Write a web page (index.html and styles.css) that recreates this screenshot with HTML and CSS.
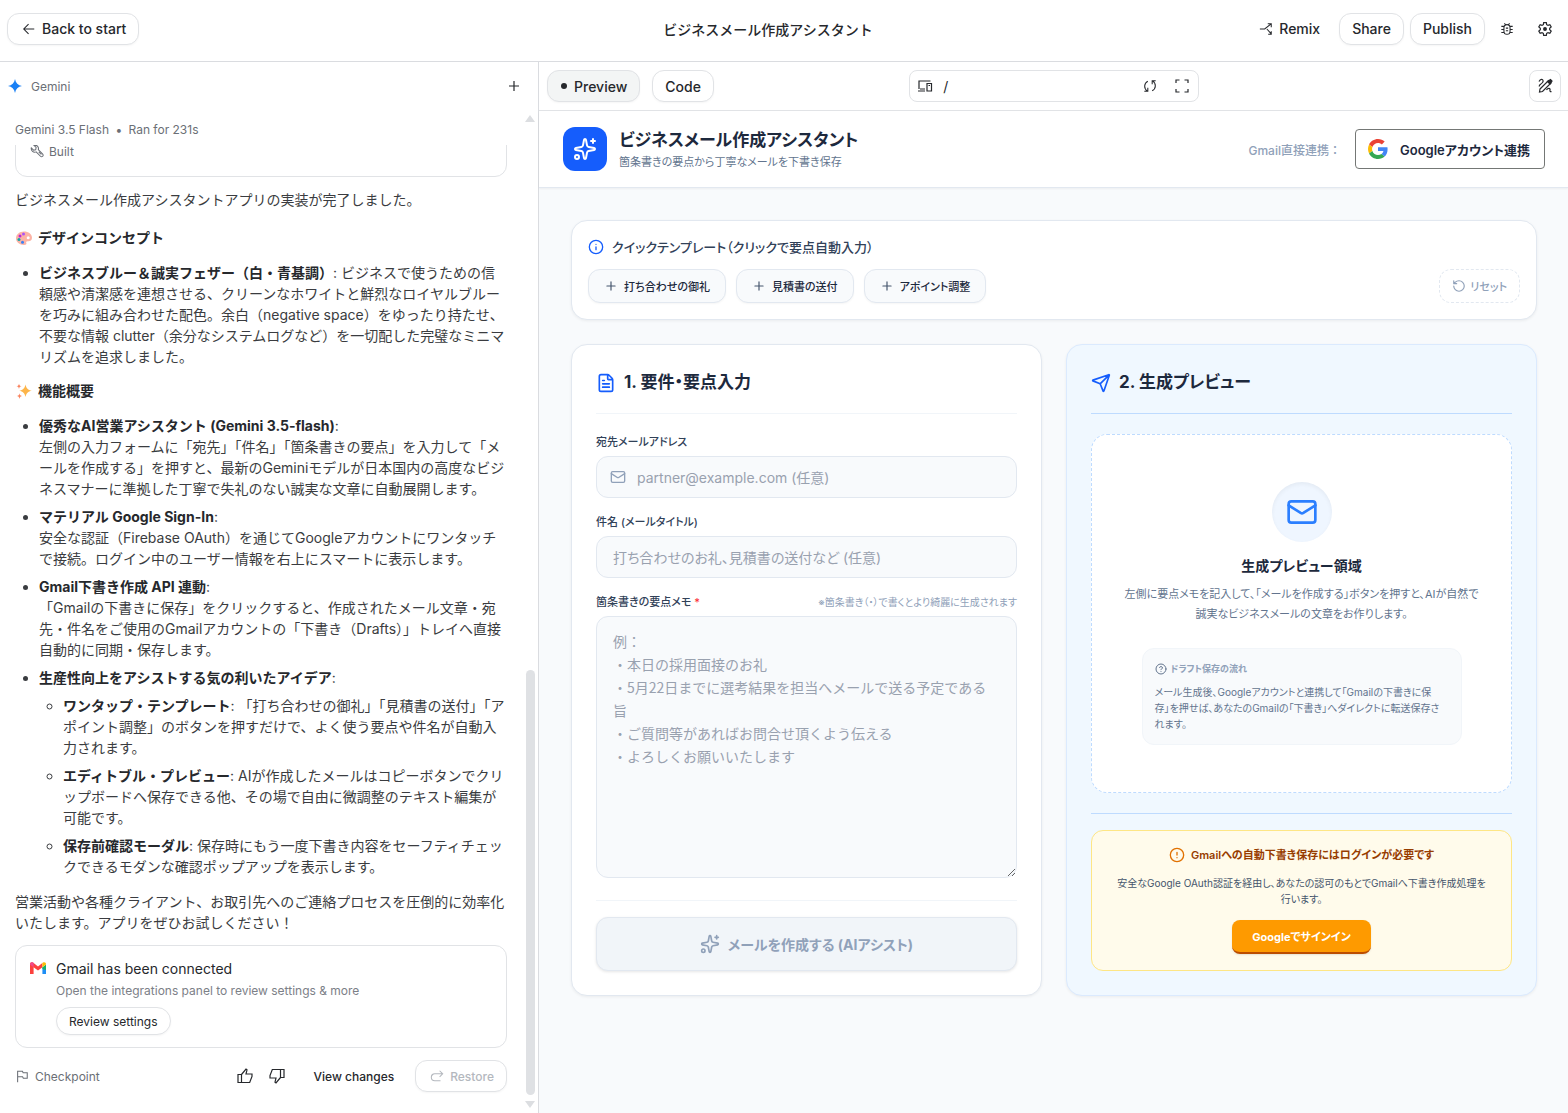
FILE: index.html
```html
<!doctype html>
<html lang="en">

<head>
  <meta charset="UTF-8">
  <meta name="viewport" content="width=device-width, initial-scale=1.0">
  <title>ビジネスメール作成アシスタント</title>
  <link rel="stylesheet" href="styles.css">
</head>

<body>
  <header class="topbar">
    <div>
      <button class="btn back" type="button">
        <svg class="icon" viewBox="0 0 16 16" width="14" height="14"><path d="M14 8H2.500M7.500 2.500 2 8l5.500 5.500"/></svg>
        Back to start
      </button>
    </div>
    <h1 class="topbar-title">ビジネスメール作成アシスタント</h1>
    <div class="topbar-actions">
      <button class="btn plain" type="button">
        <svg class="icon" viewBox="0 0 16 16" width="14" height="14"><path d="M1 8h5.500L13.500 2.500M9 8l4.500 5M10 2h4v4M10.500 14H14v-3.500"/></svg>
        Remix
      </button>
      <button class="btn" type="button">Share</button>
      <button class="btn" type="button">Publish</button>
      <button class="icon-btn" type="button" aria-label="Report a bug">
        <svg class="icon" viewBox="0 0 16 16" width="14" height="14"><path d="M4.500 6.500a3.500 3.500 0 0 1 7 0v4a3.500 3.500 0 0 1-7 0zM1.500 5h3M1.500 8.500h3M1.500 12h3M11.500 5h3M11.500 8.500h3M11.500 12h3M5 1.500l1.500 1.800M11 1.500 9.500 3.300M6.700 7h2.600M6.700 10h2.600"/></svg>
      </button>
      <button class="icon-btn" type="button" aria-label="Settings">
        <svg class="icon gear" viewBox="0 0 24 24" width="16" height="16"><path d="M10 2.500h4l.5 3 2 1.100 2.800-1.100 2 3.400-2.300 1.900v2.400l2.300 1.900-2 3.400-2.800-1.100-2 1.100-.5 3h-4l-.5-3-2-1.100-2.800 1.100-2-3.400L5 13.200v-2.400L2.700 8.900l2-3.400 2.800 1.100 2-1.100z"/><circle cx="12" cy="12" r="2" fill="currentColor"/></svg>
      </button>
    </div>
  </header>

  <div class="workspace">
    <aside class="chat">
      <div class="chat-head">
        <svg viewBox="0 0 24 24" width="14" height="14" fill="#1a80f5"><path d="M12 0c1.200 6.800 5.200 10.800 12 12-6.800 1.200-10.800 5.200-12 12-1.200-6.800-5.200-10.800-12-12C6.800 10.800 10.800 6.800 12 0z"/></svg>
        <span>Gemini</span>
        <button class="chat-add" type="button" aria-label="New chat">
          <svg class="icon" viewBox="0 0 12 12" width="12" height="12"><path d="M6 1v10M1 6h10"/></svg>
        </button>
      </div>

      <div class="chat-scroll">
        <div class="chat-body">
          <div class="run-info">Gemini 3.5 Flash <span class="dot">•</span> Ran for 231s</div>
          <div class="built">
            <svg class="icon" viewBox="0 0 16 16" width="14" height="14"><path d="M1.500 4.500 4 7l2.500-.5L7 4 4.500 1.500a4 4 0 0 1 5 5l5 5a1.700 1.700 0 0 1-2.500 2.500l-5-5a4 4 0 0 1-5.500-4.500zM10 9l3 3"/></svg>
            Built
          </div>

          <div class="message">
            <p class="intro">ビジネスメール作成アシスタントアプリの実装が完了しました。</p>

            <h3>
              <svg viewBox="0 0 18 16" width="18" height="16"><path fill="#fcb3a5" d="M9 1.500c4.500 0 8 2.500 8 6.300 0 3-2.300 3.700-4 3.500-1.600-.2-2.200.8-1.700 1.800.6 1.200-.4 1.900-2.300 1.900-4.500 0-8-2.800-8-6.700S4.500 1.500 9 1.500z"/><circle cx="5" cy="6" r="1.500" fill="#c026d3"/><circle cx="8.500" cy="4" r="1.500" fill="#a855f7"/><circle cx="4" cy="9.500" r="1.500" fill="#14a3a8"/><circle cx="7.500" cy="12.200" r="1.500" fill="#3b82f6"/><circle cx="13.200" cy="7.800" r="1.500" fill="#fff"/></svg>
              デザインコンセプト
            </h3>
            <ul>
              <li><strong>ビジネスブルー＆誠実フェザー（白・青基調）</strong>: ビジネスで使うための信頼感や清潔感を連想させる、クリーンなホワイトと鮮烈なロイヤルブルーを巧みに組み合わせた配色。余白（negative space）をゆったり持たせ、不要な情報 clutter（余分なシステムログなど）を一切配した完璧なミニマリズムを追求しました。</li>
            </ul>

            <h3>
              <svg viewBox="0 0 18 16" width="18" height="16"><path fill="#fdb54a" d="M10.500 1.500c.8 3.800 2.500 5.500 6.300 6.300-3.800.8-5.500 2.500-6.300 6.300-.8-3.800-2.500-5.500-6.300-6.300 3.800-.8 5.500-2.500 6.300-6.300z"/><path fill="#f9835e" d="M4 .800c.3 1.600 1 2.200 2.500 2.500C5 3.600 4.300 4.300 4 5.900 3.700 4.300 3 3.600 1.500 3.300 3 3 3.700 2.400 4 .8zM4.500 10.300c.3 1.800 1 2.500 2.800 2.800-1.800.3-2.500 1-2.800 2.800-.3-1.800-1-2.500-2.800-2.800 1.800-.3 2.500-1 2.800-2.800z"/></svg>
              機能概要
            </h3>
            <ul>
              <li><strong>優秀なAI営業アシスタント (Gemini 3.5-flash)</strong>:<br>左側の入力フォームに「宛先」「件名」「箇条書きの要点」を入力して「メールを作成する」を押すと、最新のGeminiモデルが日本国内の高度なビジネスマナーに準拠した丁寧で失礼のない誠実な文章に自動展開します。</li>
              <li><strong>マテリアル Google Sign-In</strong>:<br>安全な認証（Firebase OAuth）を通じてGoogleアカウントにワンタッチで接続。ログイン中のユーザー情報を右上にスマートに表示します。</li>
              <li><strong>Gmail下書き作成 API 連動</strong>:<br>「Gmailの下書きに保存」をクリックすると、作成されたメール文章・宛先・件名をご使用のGmailアカウントの「下書き（Drafts）」トレイへ直接自動的に同期・保存します。</li>
              <li><strong>生産性向上をアシストする気の利いたアイデア</strong>:
                <ul>
                  <li><strong>ワンタップ・テンプレート</strong>: 「打ち合わせの御礼」「見積書の送付」「アポイント調整」のボタンを押すだけで、よく使う要点や件名が自動入力されます。</li>
                  <li><strong>エディトブル・プレビュー</strong>: AIが作成したメールはコピーボタンでクリップボードへ保存できる他、その場で自由に微調整のテキスト編集が可能です。</li>
                  <li><strong>保存前確認モーダル</strong>: 保存時にもう一度下書き内容をセーフティチェックできるモダンな確認ポップアップを表示します。</li>
                </ul>
              </li>
            </ul>
            <p class="closing">営業活動や各種クライアント、お取引先へのご連絡プロセスを圧倒的に効率化いたします。アプリをぜひお試しください！</p>
          </div>

          <div class="connected">
            <svg viewBox="0 0 16 12" width="16" height="12"><path fill="#fc413d" d="M0 2v10h3.600V5.200L8 8.600l4.400-3.400V1L8 4.400 3 .6C1.500-.5 0 .5 0 2z"/><path fill="#f04a8c" d="M0 2C0 .5 1.600-.5 3 .6l.6.500V5.200L0 2.500z"/><path fill="#1e8ef5" d="M12.400 5.200V12H16V6z"/><path fill="#17b26a" d="M12.400 5.200 16 2.500V8l-3.600-1z"/><path fill="#fbbc04" d="M16 2c0-1.500-1.600-2.500-3-1.400l-.6.500v4.100L16 2.500z"/></svg>
            <div>
              <p class="connected-title">Gmail has been connected</p>
              <p class="connected-text">Open the integrations panel to review settings &amp; more</p>
              <button class="btn small" type="button">Review settings</button>
            </div>
          </div>

          <div class="checkpoint">
            <span class="checkpoint-label">
              <svg class="icon" viewBox="0 0 16 16" width="14" height="14"><path d="M3 15V2.500h5.500l.8 1.700H14v6.300H9.500l-.8-1.700H3"/></svg>
              Checkpoint
            </span>
            <button class="icon-btn" type="button" aria-label="Good response">
              <svg class="icon" viewBox="0 0 16 16" width="16" height="16"><path d="M1 6.500h3.500v8H1zM4.500 6.500 9 1l1 .8-1 4.200h6v2.500l-2.300 6H4.500"/></svg>
            </button>
            <button class="icon-btn" type="button" aria-label="Bad response">
              <svg class="icon" viewBox="0 0 16 16" width="16" height="16"><path d="M15 9.500h-3.500v-8H15zM11.500 9.500 7 15l-1-.8L7 10H1V7.500l2.300-6h8.200"/></svg>
            </button>
            <button class="view-changes" type="button">View changes</button>
            <button class="btn restore" type="button" disabled>
              <svg class="icon" viewBox="0 0 16 16" width="14" height="14"><path d="M14.500 5.500H5.500a4 4 0 0 0 0 8H12M11 2l3.500 3.500L11 9"/></svg>
              Restore
            </button>
          </div>
        </div>

        <div class="scrollbar" aria-hidden="true">
          <span class="arrow-up"></span>
          <span class="track"><span class="thumb"></span></span>
          <span class="arrow-down"></span>
        </div>
      </div>
    </aside>

    <main class="stage">
      <div class="toolbar">
        <div class="tabs">
          <button class="btn active" type="button"><span class="bullet"></span>Preview</button>
          <button class="btn" type="button">Code</button>
        </div>
        <div class="address">
          <svg class="icon" viewBox="0 0 16 14" width="16" height="14"><path d="M13.500 2H2v8M1 12h7M3 10h5M10 4.500h4.500V12H10zM11.500 6.500h1.500"/></svg>
          <input type="text" value="/" aria-label="Path">
          <button type="button" aria-label="Reload">
            <svg class="icon" viewBox="0 0 16 16" width="14" height="14"><path d="M5.500 2.500C.8 5 .8 11 5 13.800M1.500 14H5.500V10M10.500 13.500c4.700-2.500 4.700-8.500.5-11.300M14.500 2h-4v4"/></svg>
          </button>
          <button type="button" aria-label="Full screen">
            <svg class="icon" viewBox="0 0 16 16" width="16" height="16"><path d="M2 5V2h3.500M10.500 2H14v3M14 11v3h-3.500M5.500 14H2v-3"/></svg>
          </button>
        </div>
        <div class="toolbar-end">
          <button class="icon-btn boxed" type="button" aria-label="Annotate">
            <svg class="icon" viewBox="0 0 16 16" width="16" height="16"><path d="M2 3.500C4-.5 7.500 2 5.500 4.500S1.500 7 2.500 8.500M3 11l8.500-8.500 2.500 2.500L5.500 13.500 2.500 14zM9.500 12c1.500-2.500 4-2 3.500 0-.3 1.500.5 2 1.500 1.500"/><path fill="currentColor" d="m10.500 3.500 3-2 1.500 1.500-2 3z"/></svg>
          </button>
        </div>
      </div>

      <div class="app">
        <header class="app-header">
          <div class="logo">
            <svg class="icon lucide" viewBox="0 0 24 24" width="24" height="24"><path d="M11.017 2.814a1 1 0 0 1 1.966 0l1.051 5.558a2 2 0 0 0 1.594 1.594l5.558 1.051a1 1 0 0 1 0 1.966l-5.558 1.051a2 2 0 0 0-1.594 1.594l-1.051 5.558a1 1 0 0 1-1.966 0l-1.051-5.558a2 2 0 0 0-1.594-1.594l-5.558-1.051a1 1 0 0 1 0-1.966l5.558-1.051a2 2 0 0 0 1.594-1.594zM20 2v4M22 4h-4"/><circle cx="4" cy="20" r="2"/></svg>
          </div>
          <div class="brand">
            <h2>ビジネスメール作成アシスタント</h2>
            <p>箇条書きの要点から丁寧なメールを下書き保存</p>
          </div>
          <span class="link-label">Gmail直接連携：</span>
          <button class="google-btn" type="button">
            <svg viewBox="0 0 48 48" width="20" height="20"><path fill="#ea4335" d="M24 9.500c3.540 0 6.710 1.220 9.210 3.600l6.850-6.850C35.900 2.380 30.470 0 24 0 14.620 0 6.510 5.380 2.560 13.220l7.980 6.190C12.430 13.720 17.740 9.500 24 9.500z"/><path fill="#4285f4" d="M46.980 24.550c0-1.570-.15-3.090-.38-4.550H24v9.020h12.940c-.58 2.960-2.260 5.480-4.780 7.180l7.730 6c4.510-4.180 7.090-10.360 7.090-17.650z"/><path fill="#fbbc05" d="M10.530 28.590c-.48-1.450-.76-2.990-.76-4.590s.27-3.140.76-4.590l-7.980-6.190C.920 16.460 0 20.120 0 24c0 3.880.920 7.540 2.560 10.780l7.970-6.190z"/><path fill="#34a853" d="M24 48c6.480 0 11.930-2.130 15.890-5.810l-7.730-6c-2.150 1.450-4.920 2.300-8.160 2.300-6.260 0-11.570-4.220-13.470-9.910l-7.980 6.190C6.510 42.620 14.620 48 24 48z"/></svg>
            Googleアカウント連携
          </button>
        </header>

        <div class="app-main">
          <section class="templates">
            <h3>
              <svg class="icon lucide" viewBox="0 0 24 24" width="16" height="16"><circle cx="12" cy="12" r="10"/><path d="M12 16v-4M12 8h.01"/></svg>
              クイックテンプレート（クリックで要点自動入力）
            </h3>
            <div class="template-row">
              <button class="chip" type="button"><svg class="icon lucide" viewBox="0 0 24 24" width="14" height="14"><path d="M5 12h14M12 5v14"/></svg>打ち合わせの御礼</button>
              <button class="chip" type="button"><svg class="icon lucide" viewBox="0 0 24 24" width="14" height="14"><path d="M5 12h14M12 5v14"/></svg>見積書の送付</button>
              <button class="chip" type="button"><svg class="icon lucide" viewBox="0 0 24 24" width="14" height="14"><path d="M5 12h14M12 5v14"/></svg>アポイント調整</button>
              <button class="chip reset" type="button"><svg class="icon lucide" viewBox="0 0 24 24" width="14" height="14"><path d="M3 12a9 9 0 1 0 9-9 9.750 9.750 0 0 0-6.740 2.740L3 8M3 3v5h5"/></svg>リセット</button>
            </div>
          </section>

          <div class="panels">
            <form class="panel">
              <h3 class="panel-title">
                <svg class="icon lucide" viewBox="0 0 24 24" width="20" height="20"><path d="M6 22a2 2 0 0 1-2-2V4a2 2 0 0 1 2-2h8a2.400 2.400 0 0 1 1.704.706l3.588 3.588A2.400 2.400 0 0 1 20 8v12a2 2 0 0 1-2 2zM14 2v5a1 1 0 0 0 1 1h5M10 9H8M16 13H8M16 17H8"/></svg>
                1. 要件・要点入力
              </h3>

              <label class="field-label" for="to">宛先メールアドレス</label>
              <div class="input-wrap">
                <svg class="icon lucide" viewBox="0 0 24 24" width="16" height="16"><path d="m22 7-8.991 5.727a2 2 0 0 1-2.009 0L2 7"/><rect x="2" y="4" width="20" height="16" rx="2"/></svg>
                <input id="to" type="email" placeholder="partner@example.com (任意)">
              </div>

              <label class="field-label" for="subject">件名 (メールタイトル)</label>
              <div class="input-wrap">
                <input id="subject" type="text" placeholder="打ち合わせのお礼、見積書の送付など (任意)">
              </div>

              <div class="memo-label">
                <label class="field-label" for="memo">箇条書きの要点メモ <span class="required">*</span></label>
                <span class="hint">※箇条書き（・）で書くとより綺麗に生成されます</span>
              </div>
              <textarea id="memo" rows="10" placeholder="例：
・本日の採用面接のお礼
・5月22日までに選考結果を担当へメールで送る予定である旨
・ご質問等があればお問合せ頂くよう伝える
・よろしくお願いいたします"></textarea>

              <div class="submit-row">
                <button class="submit" type="submit" disabled>
                  <svg class="icon lucide" viewBox="0 0 24 24" width="20" height="20"><path d="M11.017 2.814a1 1 0 0 1 1.966 0l1.051 5.558a2 2 0 0 0 1.594 1.594l5.558 1.051a1 1 0 0 1 0 1.966l-5.558 1.051a2 2 0 0 0-1.594 1.594l-1.051 5.558a1 1 0 0 1-1.966 0l-1.051-5.558a2 2 0 0 0-1.594-1.594l-5.558-1.051a1 1 0 0 1 0-1.966l5.558-1.051a2 2 0 0 0 1.594-1.594zM20 2v4M22 4h-4"/><circle cx="4" cy="20" r="2"/></svg>
                  メールを作成する (AIアシスト)
                </button>
              </div>
            </form>

            <section class="panel blue">
              <h3 class="panel-title">
                <svg class="icon lucide" viewBox="0 0 24 24" width="20" height="20"><path d="M14.536 21.686a.5.5 0 0 0 .937-.024l6.500-19a.496.496 0 0 0-.635-.635l-19 6.500a.5.5 0 0 0-.024.937l7.930 3.180a2 2 0 0 1 1.112 1.110zM21.854 2.147l-10.940 10.939"/></svg>
                2. 生成プレビュー
              </h3>

              <div class="empty">
                <div class="mail-circle">
                  <svg class="icon lucide" viewBox="0 0 24 24" width="32" height="32"><path d="m22 7-8.991 5.727a2 2 0 0 1-2.009 0L2 7"/><rect x="2" y="4" width="20" height="16" rx="2"/></svg>
                </div>
                <h4>生成プレビュー領域</h4>
                <p class="empty-text">左側に要点メモを記入して、「メールを作成する」ボタンを押すと、AIが自然で誠実なビジネスメールの文章をお作りします。</p>
                <div class="flow">
                  <h5>
                    <svg class="icon lucide" viewBox="0 0 24 24" width="12" height="12"><circle cx="12" cy="12" r="10"/><path d="M9.090 9a3 3 0 0 1 5.830 1c0 2-3 3-3 3M12 17h.01"/></svg>
                    ドラフト保存の流れ
                  </h5>
                  <p>メール生成後、Googleアカウントと連携して「Gmailの下書きに保<br>存」を押せば、あなたのGmailの「下書き」へダイレクトに転送保存さ<br>れます。</p>
                </div>
              </div>

              <div class="login-row">
                <div class="login">
                  <h4>
                    <svg class="icon lucide" viewBox="0 0 24 24" width="16" height="16"><circle cx="12" cy="12" r="10"/><path d="M12 8v4M12 16h.01"/></svg>
                    Gmailへの自動下書き保存にはログインが必要です
                  </h4>
                  <p>安全なGoogle OAuth認証を経由し、あなたの認可のもとでGmailへ下書き作成処理を<br>行います。</p>
                  <button class="signin" type="button">Googleでサインイン</button>
                </div>
              </div>
            </section>
          </div>
        </div>
      </div>
    </main>
  </div>
</body>

</html>
```

FILE: styles.css
```css
* {
  box-sizing: border-box;
}

body {
  margin: 0;
  min-height: 100vh;
  display: flex;
  flex-direction: column;
  font-family: Inter, "Noto Sans CJK JP", sans-serif;
  font-size: 14px;
  color: #26282c;
  background: #fff;
}

h1, h2, h3, h4, h5, p, ul {
  margin: 0;
}

button, input, textarea {
  font: inherit;
  color: inherit;
}

button {
  padding: 0;
  border: 0;
  background: none;
  cursor: pointer;
}

svg {
  flex: none;
  display: block;
}

.icon {
  fill: none;
  stroke: currentColor;
  stroke-width: 1.2;
}

.icon.gear {
  stroke-width: 1.8;
}

.icon.lucide {
  stroke-width: 2;
  stroke-linecap: round;
  stroke-linejoin: round;
}

.btn {
  display: inline-flex;
  align-items: center;
  justify-content: center;
  gap: 6px;
  height: 32px;
  padding: 0 12px;
  border: 1px solid #e1e3e6;
  border-radius: 12px;
  background: #fff;
  font-weight: 500;
  white-space: nowrap;
  box-shadow: 0 1px 2px rgba(0, 0, 0, 0.04);
}

.btn.plain {
  border-color: transparent;
  box-shadow: none;
}

.btn.active {
  gap: 7px;
  padding-left: 13px;
  background: #f3f5f5;
}

.icon-btn {
  display: inline-flex;
  align-items: center;
  justify-content: center;
  width: 32px;
  height: 32px;
}

.icon-btn.boxed {
  border: 1px solid #e1e3e6;
  border-radius: 8px;
}

/* top bar */
.topbar {
  display: grid;
  grid-template-columns: 1fr auto 1fr;
  align-items: center;
  height: 62px;
  padding: 0 7px 4px;
  border-bottom: 1px solid #dadce0;
}

.back {
  padding: 0 12px 0 14px;
}

.topbar-title {
  padding-right: 32px;
  font-size: 14px;
  font-weight: 500;
}

.topbar-actions {
  display: flex;
  justify-content: flex-end;
  gap: 6px;
}

.workspace {
  flex: 1;
  display: grid;
  grid-template-columns: minmax(0, 11fr) minmax(0, 21fr);
}

/* chat column */
.chat {
  display: flex;
  flex-direction: column;
  border-right: 1px solid #dadce0;
}

.chat-head {
  display: flex;
  align-items: center;
  gap: 9px;
  height: 48px;
  padding: 0 18px 0 8px;
  font-size: 12px;
  color: #6b6f76;
}

.chat-add {
  margin-left: auto;
  color: #26282c;
}

.chat-scroll {
  flex: 1;
  display: grid;
  grid-template-columns: minmax(0, 1fr) 16px;
}

.chat-body {
  padding: 0 15px;
}

.run-info {
  position: relative;
  z-index: 1;
  height: 35px;
  margin: 0 -1px;
  padding: 10px 1px 0;
  background: #fff;
  font-size: 12px;
  line-height: 20px;
  color: #6b6f76;
}

.dot {
  margin: 0 3px;
}

.built {
  display: flex;
  align-items: center;
  gap: 5px;
  height: 50px;
  margin-top: -18px;
  padding: 0 14px 2px;
  border: 1px solid #e1e3e6;
  border-radius: 12px;
  font-size: 12px;
  color: #6b6f76;
}

.message {
  padding: 12px 0;
  line-height: 21px;
  color: #3a3c40;
}

.message .intro {
  margin-bottom: 17px;
}

.message h3 {
  display: flex;
  align-items: center;
  gap: 5px;
  margin: 13px 0 14px;
  font-size: 14px;
  font-weight: 700;
  color: #26282c;
}

.message ul {
  padding-left: 24px;
}

.message li + li,
.message li > ul {
  margin-top: 7px;
}

.message strong {
  color: #26282c;
}

.closing {
  margin-top: 14px;
}

.connected {
  display: flex;
  gap: 10px;
  padding: 12px 14px;
  border: 1px solid #e1e3e6;
  border-radius: 12px;
}

.connected svg {
  margin-top: 4px;
}

.connected-title {
  line-height: 22px;
}

.connected-text {
  font-size: 12px;
  line-height: 22px;
  color: #7c8087;
}

.btn.small {
  height: 28px;
  margin-top: 5px;
  border-radius: 14px;
  font-size: 12px;
  font-weight: 400;
}

.checkpoint {
  display: flex;
  align-items: center;
  margin: 12px 0 20px;
  font-size: 12px;
}

.checkpoint-label {
  display: flex;
  align-items: center;
  gap: 6px;
  margin-right: auto;
  color: #6b6f76;
}

.view-changes {
  margin: 0 21px;
  font-weight: 500;
}

.restore {
  padding: 0 12px 0 14px;
  color: #b4b8be;
}

.scrollbar {
  display: flex;
  flex-direction: column;
  align-items: center;
  padding: 5px 0;
}

.arrow-up,
.arrow-down {
  border: 5px solid transparent;
}

.arrow-up {
  border-top: 0;
  border-bottom: 7px solid #dcdee1;
}

.arrow-down {
  border-bottom: 0;
  border-top: 7px solid #dcdee1;
}

.track {
  flex: 1;
  display: flex;
  align-items: flex-end;
  padding: 6px 0;
}

.thumb {
  width: 9px;
  height: 44%;
  border-radius: 5px;
  background: #dfe1e4;
}

/* preview toolbar */
.stage {
  display: flex;
  flex-direction: column;
}

.toolbar {
  display: grid;
  grid-template-columns: minmax(0, 5fr) minmax(0, 4fr) minmax(0, 5fr);
  align-items: center;
  height: 49px;
  padding: 0 7px 0 8px;
  border-bottom: 1px solid #e1e3e6;
}

.tabs {
  display: flex;
  gap: 12px;
}

.bullet {
  width: 6px;
  height: 6px;
  border-radius: 3px;
  background: #26282c;
}

.address {
  display: flex;
  align-items: center;
  gap: 10px;
  height: 32px;
  padding: 0 8px 0 7px;
  border: 1px solid #e1e3e6;
  border-radius: 8px;
}

.address input {
  flex: 1;
  min-width: 0;
  padding: 0;
  border: 0;
  outline: 0;
}

.address button + button {
  margin-left: 7px;
}

.toolbar-end {
  text-align: right;
}

/* the mail assistant */
.app {
  flex: 1;
  background: #f8fafc;
  color: #1d293d;
  font-feature-settings: "palt";
}

.app-header {
  display: flex;
  align-items: center;
  height: 77px;
  padding: 0 23px 0 24px;
  border-bottom: 1px solid #e2e8f0;
  background: #fff;
  box-shadow: 0 1px 2px rgba(0, 0, 0, 0.05);
}

.logo {
  display: grid;
  place-items: center;
  width: 44px;
  height: 44px;
  border-radius: 12px;
  background: #155dfc;
  color: #fff;
}

.brand {
  margin: 0 auto 0 12px;
}

.brand h2 {
  font-size: 17px;
  line-height: 26px;
  font-weight: 700;
}

.brand p {
  font-size: 11px;
  line-height: 18px;
  color: #62748e;
}

.link-label {
  margin-right: 14px;
  font-size: 12px;
  font-weight: 500;
  font-feature-settings: normal;
  color: #90a1b9;
}

.google-btn {
  display: flex;
  align-items: center;
  gap: 12px;
  height: 40px;
  padding: 0 14px 0 12px;
  border: 1px solid #747775;
  border-radius: 4px;
  background: #fff;
  font-size: 13px;
  font-weight: 600;
}

.app-main {
  padding: 32px 31px 32px 32px;
}

.templates {
  padding: 16px;
  border: 1px solid #e2e8f0;
  border-radius: 16px;
  background: #fff;
  box-shadow: 0 1px 3px rgba(0, 0, 0, 0.06);
}

.templates h3 {
  display: flex;
  align-items: center;
  gap: 8px;
  margin-bottom: 12px;
  font-size: 13px;
  line-height: 20px;
  font-weight: 500;
  color: #314158;
}

.templates h3 svg {
  color: #155dfc;
}

.template-row {
  display: flex;
  flex-wrap: wrap;
  gap: 10px;
}

.chip {
  display: flex;
  align-items: center;
  gap: 6px;
  height: 34px;
  padding: 0 15px;
  border: 1px solid #e2e8f0;
  border-radius: 12px;
  background: #f8fafc;
  font-size: 11px;
  font-weight: 500;
  box-shadow: 0 1px 2px rgba(0, 0, 0, 0.04);
}

.chip svg {
  color: #45556c;
}

.chip.reset {
  gap: 4px;
  margin-left: auto;
  padding: 0 12px;
  border-style: dashed;
  background: none;
  color: #90a1b9;
  box-shadow: none;
}

.chip.reset svg {
  color: inherit;
}

.panels {
  display: grid;
  grid-template-columns: 1fr 1fr;
  gap: 24px;
  margin-top: 24px;
}

.panel {
  display: flex;
  flex-direction: column;
  padding: 24px;
  border: 1px solid #e2e8f0;
  border-radius: 16px;
  background: #fff;
  box-shadow: 0 1px 3px rgba(0, 0, 0, 0.06);
}

.panel.blue {
  border-color: #dbeafe;
  background: #f0f8ff;
}

.panel-title {
  display: flex;
  align-items: center;
  gap: 8px;
  padding-bottom: 17px;
  margin-bottom: 20px;
  border-bottom: 1px solid #f1f5f9;
  font-size: 17px;
  line-height: 27px;
  font-weight: 700;
}

.panel-title svg {
  color: #155dfc;
}

.blue .panel-title {
  border-color: #bedbff;
}

.field-label {
  margin-bottom: 6px;
  font-size: 11px;
  line-height: 16px;
  font-weight: 500;
  color: #314158;
}

.input-wrap {
  display: flex;
  align-items: center;
  gap: 11px;
  height: 42px;
  margin-bottom: 16px;
  padding: 0 16px 0 13px;
  border: 1px solid #e2e8f0;
  border-radius: 12px;
  background: #f8fafc;
}

.input-wrap svg {
  color: #90a1b9;
}

.input-wrap input {
  flex: 1;
  min-width: 0;
  padding: 0;
  border: 0;
  outline: 0;
  background: none;
  font-feature-settings: inherit;
}

.input-wrap input:first-child {
  padding-left: 3px;
}

::placeholder {
  color: #99a1af;
  opacity: 1;
}

.memo-label {
  display: flex;
  align-items: center;
  justify-content: space-between;
  margin-bottom: 6px;
}

.memo-label .field-label {
  margin: 0;
}

.required {
  color: #fb2c36;
}

.hint {
  font-size: 10px;
  line-height: 16px;
  color: #90a1b9;
}

textarea {
  display: block;
  width: 100%;
  height: 262px;
  padding: 13px 16px;
  border: 1px solid #e2e8f0;
  border-radius: 12px;
  background: #f8fafc;
  font-family: "Noto Sans CJK JP", sans-serif;
  font-feature-settings: normal;
  line-height: 23px;
  resize: vertical;
}

.submit-row {
  margin-top: 22px;
  padding-top: 16px;
  border-top: 1px solid #f1f5f9;
}

.submit {
  display: flex;
  align-items: center;
  justify-content: center;
  gap: 8px;
  width: 100%;
  height: 54px;
  border: 1px solid #e2e8f0;
  border-radius: 12px;
  background: #f1f5f9;
  font-size: 14px;
  font-weight: 700;
  color: #90a1b9;
  box-shadow: 0 1px 3px rgba(0, 0, 0, 0.1);
}

.empty {
  flex: 1;
  display: flex;
  flex-direction: column;
  align-items: center;
  justify-content: center;
  padding: 24px;
  border: 1px dashed #bedbff;
  border-radius: 16px;
  background: #fff;
  text-align: center;
}

.mail-circle {
  display: grid;
  place-items: center;
  width: 60px;
  height: 60px;
  border-radius: 50%;
  background: #eff6ff;
  color: #2b7fff;
  box-shadow: inset 0 2px 4px rgba(0, 0, 0, 0.05);
}

.empty h4 {
  margin: 12px 0 6px;
  font-size: 14px;
  line-height: 24px;
}

.empty-text {
  max-width: 360px;
  font-size: 11px;
  line-height: 20px;
  color: #62748e;
}

.flow {
  width: 100%;
  max-width: 320px;
  margin-top: 24px;
  padding: 12px;
  border: 1px solid #f1f5f9;
  border-radius: 12px;
  background: #f8fafc;
  text-align: left;
}

.flow h5 {
  display: flex;
  align-items: center;
  gap: 4px;
  margin-bottom: 8px;
  font-size: 9px;
  line-height: 15px;
  font-weight: 700;
  color: #90a1b9;
}

.flow h5 svg {
  color: #62748e;
}

.flow p {
  font-size: 10px;
  line-height: 16px;
  color: #62748e;
}

.login-row {
  margin-top: 20px;
  padding-top: 16px;
  border-top: 1px solid #bedbff;
}

.login {
  padding: 16px;
  border: 1px solid #fee685;
  border-radius: 12px;
  background: #fffbeb;
  text-align: center;
}

.login h4 {
  display: flex;
  align-items: center;
  justify-content: center;
  gap: 6px;
  font-size: 11px;
  line-height: 16px;
  font-weight: 600;
  color: #973c00;
}

.login h4 svg {
  color: #e17100;
}

.login p {
  margin: 12px 0 13px;
  font-size: 10px;
  line-height: 16px;
  color: #45556c;
}

.signin {
  height: 34px;
  padding: 0 20px;
  border-bottom: 2px solid #bb4d00;
  border-radius: 8px;
  background: #fe9a00;
  font-size: 11px;
  font-weight: 700;
  color: #fff;
  box-shadow: 0 1px 2px rgba(0, 0, 0, 0.1);
}
```
